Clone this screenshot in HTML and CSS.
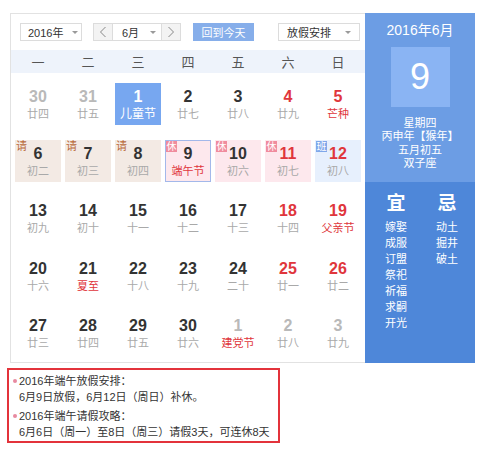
FILE: index.html
```html
<!DOCTYPE html>
<html lang="zh-CN">
<head>
<meta charset="utf-8">
<title>万年历</title>
<link rel="stylesheet" href="styles.css">
</head>
<body>
<div class="wrap">
  <div class="cal">
    <div class="toolbar">
      <div class="sel sel-year"><span>2016年</span><i class="caret"></i></div>
      <div class="month-group">
        <div class="nav"><svg width="8" height="12" viewBox="0 0 8 12"><path d="M6.5 1 L1.5 6 L6.5 11" fill="none" stroke="#888" stroke-width="1"/></svg></div>
        <div class="sel sel-month"><span>6月</span><i class="caret"></i></div>
        <div class="nav"><svg width="8" height="12" viewBox="0 0 8 12"><path d="M1.5 1 L6.5 6 L1.5 11" fill="none" stroke="#888" stroke-width="1"/></svg></div>
      </div>
      <div class="today-btn">回到今天</div>
      <div class="sel sel-holiday"><span>放假安排</span><i class="caret"></i></div>
    </div>
    <div class="weekdays">
      <span>一</span><span>二</span><span>三</span><span>四</span><span>五</span><span>六</span><span>日</span>
    </div>
    <div class="grid">
      <div class="day other"><b>30</b><em>廿四</em></div>
      <div class="day other"><b>31</b><em>廿五</em></div>
      <div class="day active"><b>1</b><em>儿童节</em></div>
      <div class="day"><b>2</b><em>廿七</em></div>
      <div class="day"><b>3</b><em>廿八</em></div>
      <div class="day red"><b>4</b><em>廿九</em></div>
      <div class="day red fest"><b>5</b><em>芒种</em></div>

      <div class="day leave"><i class="tag">请</i><b>6</b><em>初二</em></div>
      <div class="day leave"><i class="tag">请</i><b>7</b><em>初三</em></div>
      <div class="day leave"><i class="tag">请</i><b>8</b><em>初四</em></div>
      <div class="day rest selected fest"><i class="tag">休</i><b>9</b><em>端午节</em></div>
      <div class="day rest"><i class="tag">休</i><b>10</b><em>初六</em></div>
      <div class="day rest red"><i class="tag">休</i><b>11</b><em>初七</em></div>
      <div class="day work red"><i class="tag">班</i><b>12</b><em>初八</em></div>

      <div class="day"><b>13</b><em>初九</em></div>
      <div class="day"><b>14</b><em>初十</em></div>
      <div class="day"><b>15</b><em>十一</em></div>
      <div class="day"><b>16</b><em>十二</em></div>
      <div class="day"><b>17</b><em>十三</em></div>
      <div class="day red"><b>18</b><em>十四</em></div>
      <div class="day red fest"><b>19</b><em>父亲节</em></div>

      <div class="day"><b>20</b><em>十六</em></div>
      <div class="day fest"><b>21</b><em>夏至</em></div>
      <div class="day"><b>22</b><em>十八</em></div>
      <div class="day"><b>23</b><em>十九</em></div>
      <div class="day"><b>24</b><em>二十</em></div>
      <div class="day red"><b>25</b><em>廿一</em></div>
      <div class="day red"><b>26</b><em>廿二</em></div>

      <div class="day"><b>27</b><em>廿三</em></div>
      <div class="day"><b>28</b><em>廿四</em></div>
      <div class="day"><b>29</b><em>廿五</em></div>
      <div class="day"><b>30</b><em>廿六</em></div>
      <div class="day other fest"><b>1</b><em>建党节</em></div>
      <div class="day other"><b>2</b><em>廿八</em></div>
      <div class="day other"><b>3</b><em>廿九</em></div>
    </div>
  </div>
  <div class="panel">
    <div class="panel-top">
      <div class="ym">2016年6月</div>
      <div class="bigday">9</div>
      <div class="info">
        <p>星期四</p>
        <p>丙申年【猴年】</p>
        <p>五月初五</p>
        <p>双子座</p>
      </div>
    </div>
    <div class="panel-bottom">
      <ul class="yj">
        <li class="yj-head">宜</li>
        <li>嫁娶</li><li>成服</li><li>订盟</li><li>祭祀</li><li>祈福</li><li>求嗣</li><li>开光</li>
      </ul>
      <ul class="yj">
        <li class="yj-head">忌</li>
        <li>动土</li><li>掘井</li><li>破土</li>
      </ul>
    </div>
  </div>
</div>
<div class="notice">
  <div class="note">
    <p class="note-title">2016年端午放假安排：</p>
    <p>6月9日放假，6月12日（周日）补休。</p>
  </div>
  <div class="note">
    <p class="note-title">2016年端午请假攻略：</p>
    <p>6月6日（周一）至8日（周三）请假3天，可连休8天</p>
  </div>
</div>
</body>
</html>
```

FILE: styles.css
```css
* { box-sizing: border-box; }
html, body { margin: 0; padding: 0; background: #fff; }
body {
  font-family: "Liberation Sans", Arial, "Noto Sans CJK SC", sans-serif;
  color: #333;
  font-size: 12px;
}
p { margin: 0; }
ul { margin: 0; padding: 0; list-style: none; }

.wrap {
  display: flex;
  padding: 13px 0 0 10px;
}

.cal {
  width: 355px;
  height: 350px;
  border: 1px solid #e2e2e2;
  border-right: none;
  display: flex;
  flex-direction: column;
}

.toolbar {
  height: 36px;
  display: flex;
  align-items: center;
  padding: 0 0 0 9px;
}

.sel {
  height: 18px;
  border: 1px solid #dcdcdc;
  background: #fff;
  display: flex;
  align-items: center;
  justify-content: space-between;
  font-size: 11px;
  color: #333;
}
.caret {
  width: 0; height: 0;
  border-left: 3px solid transparent;
  border-right: 3px solid transparent;
  border-top: 3px solid #9a9a9a;
}
.sel-year { width: 62px; padding: 0 2px 0 7px; }
.sel-year .caret { margin-right: 1px; }

.month-group {
  margin-left: 11px;
  height: 18px;
  display: flex;
  border: 1px solid #dcdcdc;
}
.nav {
  width: 18px;
  background: #f3f3f3;
  display: flex;
  align-items: center;
  justify-content: center;
}
.sel-month {
  width: 50px;
  height: 16px;
  border: none;
  border-left: 1px solid #dcdcdc;
  border-right: 1px solid #dcdcdc;
  padding: 0 5px 0 9px;
}

.today-btn {
  margin-left: 12px;
  width: 61px;
  height: 18px;
  background: #86aeea;
  color: #fff;
  font-size: 11px;
  display: flex;
  align-items: center;
  justify-content: center;
}

.sel-holiday {
  margin-left: 24px;
  width: 82px;
  padding: 0 8px 0 8px;
}

.weekdays {
  height: 23px;
  background: #eef3fb;
  display: grid;
  grid-template-columns: repeat(7, 50px);
  padding: 0 2px;
  align-items: center;
  font-size: 13px;
  color: #555;
}
.weekdays span { text-align: center; }

.grid {
  flex: 1;
  display: grid;
  grid-template-columns: repeat(7, 50px);
  grid-template-rows: repeat(5, 1fr);
  padding: 2px 2px 0;
  align-items: center;
  justify-items: center;
}

.day {
  position: relative;
  width: 46px;
  height: 42px;
  padding-top: 5px;
  text-align: center;
}
.day b {
  display: block;
  font-size: 16px;
  line-height: 18px;
  font-weight: bold;
  color: #333;
}
.day em {
  display: block;
  font-style: normal;
  font-size: 11px;
  line-height: 14px;
  color: #a9a9a9;
  margin-top: 1px;
}
.day.red b { color: #e0363c; }
.day.fest em { color: #e0363c; }
.day.other b { color: #b9b9b9; }
.day.other em { color: #a9a9a9; }
.day.other.fest em { color: #e0363c; }

.day.active { background: #77a7f0; }
.day.active b, .day.active em { color: #fff; }
.day.active em { font-size: 12px; }

.tag {
  position: absolute;
  left: 1px;
  top: 1px;
  width: 11px;
  height: 11px;
  font-style: normal;
  font-size: 10px;
  line-height: 11px;
  text-align: center;
  color: #fff;
}
.day.leave { background: #f3eae4; }
.day.leave .tag { color: #b8693a; background: transparent; font-size: 11px; }
.day.rest { background: #fde8ed; }
.day.rest .tag { background: #f08c9e; }
.day.work { background: #e7f0fd; }
.day.work .tag { background: #7fa8ea; }
.day.selected { border: 1px solid #a3b8ea; padding-top: 4px; }
.day.selected .tag { left: 0; top: 0; }

.panel {
  width: 110px;
  height: 350px;
  display: flex;
  flex-direction: column;
  color: #fff;
}
.panel-top {
  height: 169px;
  background: #6c9de4;
  display: flex;
  flex-direction: column;
  align-items: center;
  padding-top: 9px;
}
.ym {
  font-size: 14px;
  line-height: 16px;
}
.bigday {
  margin-top: 9px;
  width: 59px;
  height: 60px;
  background: #8ab4f3;
  font-size: 36px;
  line-height: 60px;
  text-align: center;
}
.info {
  margin-top: 10px;
  text-align: center;
  font-size: 11px;
  line-height: 13.4px;
}

.panel-bottom {
  flex: 1;
  background: #4e87d9;
  display: flex;
  padding: 11px 0 0 20px;
  gap: 29px;
}
.yj li {
  font-size: 11px;
  line-height: 16px;
  width: 22px;
  text-align: center;
}
.yj .yj-head {
  font-size: 19px;
  font-weight: bold;
  line-height: 22px;
  margin-bottom: 4px;
}

.notice {
  margin: 5px 0 0 7px;
  width: 273px;
  border: 2px solid #e3333b;
  padding: 3px 0 1px 10px;
  font-size: 11px;
  line-height: 16px;
  color: #333;
}
.note + .note { margin-top: 3px; }
.note-title { position: relative; }
.note-title::before {
  content: "";
  position: absolute;
  left: -6px;
  top: 6px;
  width: 4px;
  height: 4px;
  border-radius: 50%;
  background: #e88aa0;
}
```
